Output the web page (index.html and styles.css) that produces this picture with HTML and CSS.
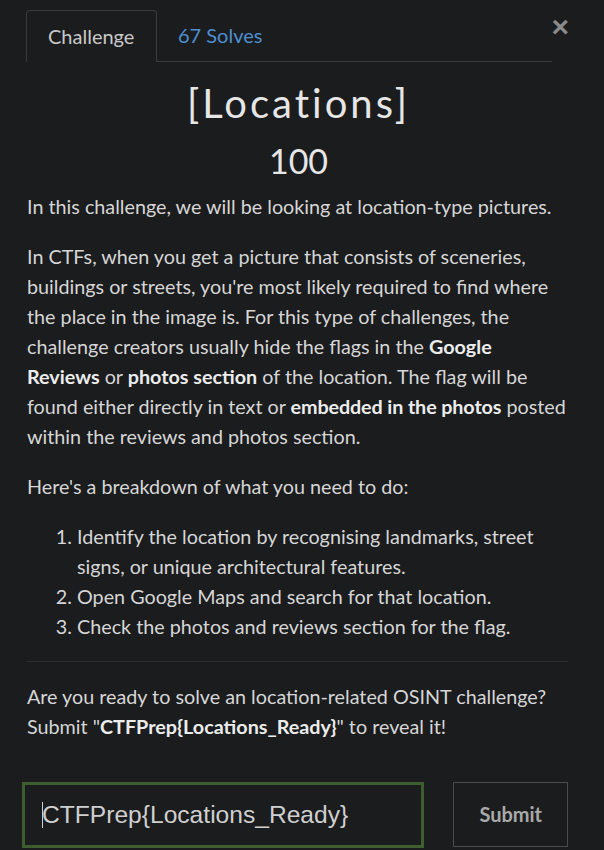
FILE: index.html
```html
<!DOCTYPE html>
<html>
<head>
<meta charset="utf-8">
<link rel="stylesheet" href="styles.css">
</head>
<body>
<div class="modal">
  <div class="tabs-row">
    <div class="tabs">
      <div class="tab active">Challenge</div>
      <div class="tab link">67 Solves</div>
    </div>
    <div class="close">×</div>
  </div>
  <h1 class="title">[Locations]</h1>
  <div class="points">100</div>
  <div class="desc">
    <p>In this challenge, we will be looking at location-type pictures.</p>
    <p>In CTFs, when you get a picture that consists of sceneries, buildings or streets, you're most likely required to find where the place in the image is. For this type of challenges, the challenge creators usually hide the flags in the <b>Google Reviews</b> or <b>photos section</b> of the location. The flag will be found either directly in text or <b class="tight">embedded in the photos</b> posted within the reviews and photos section.</p>
    <p>Here's a breakdown of what you need to do:</p>
    <ol>
      <li>Identify the location by recognising landmarks, street signs, or unique architectural features.</li>
      <li>Open Google Maps and search for that location.</li>
      <li>Check the photos and reviews section for the flag.</li>
    </ol>
    <hr>
    <p>Are you ready to solve an location-related OSINT challenge? Submit "<b>CTFPrep{Locations_Ready}</b>" to reveal it!</p>
  </div>
  <div class="submit-row">
    <div class="input"><span class="caret"></span>CTFPrep{Locations_Ready}</div>
    <div class="btn">Submit</div>
  </div>
</div>
</body>
</html>
```
FILE: styles.css
```css
html, body { margin: 0; padding: 0; }
body {
  background: #1b1c1e;
  color: #d6d6d6;
  font-family: Lato, "Noto Sans", sans-serif;
  width: 604px;
  height: 850px;
  overflow: hidden;
}
.modal { padding: 10px 36px 0 27px; position: relative; }
.tabs-row { display: flex; }
.tabs {
  display: flex;
  width: 525px;
  border-bottom: 1px solid #3a3b3d;
}
.tab {
  font-size: 20px;
  height: 50px;
  line-height: 51px;
  padding: 0 21px;
  box-sizing: border-box;
}
.tab.active {
  border: 1px solid #3a3b3d;
  border-bottom: none;
  border-radius: 4px 4px 0 0;
  color: #c8c8c8;
  margin-left: -1px;
  width: 131px;
  margin-bottom: -1px;
  height: 52px;
  background: #1b1c1e;
}
.tab.link { color: #4d8fd0; }
.close {
  position: absolute;
  right: 35px;
  top: 10px;
  font-size: 30px;
  font-weight: bold;
  color: #8a8a8a;
  font-family: "Liberation Sans", sans-serif;
}
.title {
  margin: 18px 0 0;
  text-align: center;
  font-weight: 400;
  font-size: 40px;
  line-height: 46px;
  color: #e6e6e6;
  letter-spacing: 3px;
  padding-left: 2px;
}
.points {
  text-align: center;
  font-size: 34px;
  line-height: 40px;
  margin-top: 15px;
  color: #e6e6e6;
  padding-left: 2px;
}
.desc { font-size: 19.75px; line-height: 30px; margin-top: 11px; }
.desc p { margin: 0 0 20px; }
.desc b { font-weight: 700; color: #ececec; }
.desc b.tight { letter-spacing: -0.12px; }
.desc ol { margin: 0 0 19px; padding-left: 50px; }
.desc hr {
  border: none;
  border-top: 1px solid #2c2d2f;
  margin: 0 0 20px 0;
}
.submit-row { display: flex; gap: 29px; margin-top: 40px; margin-left: -5px; }
.input {
  width: 404px;
  height: 66px;
  box-sizing: border-box;
  border: 3px solid #3f5e2f;
  font-family: "Liberation Sans", sans-serif;
  font-size: 24.6px;
  color: #cfcfcf;
  line-height: 60px;
  padding-left: 17px;
  display: flex;
  align-items: center;
}
.caret {
  display: inline-block;
  width: 1px;
  height: 26px;
  background: #cfcfcf;
  margin-right: -1px;
}
.btn {
  width: 115px;
  height: 65px;
  box-sizing: border-box;
  border: 1px solid #4a4b4d;
  text-align: center;
  line-height: 63px;
  font-size: 20px;
  font-weight: 700;
  color: #a9a9a9;
}
```
